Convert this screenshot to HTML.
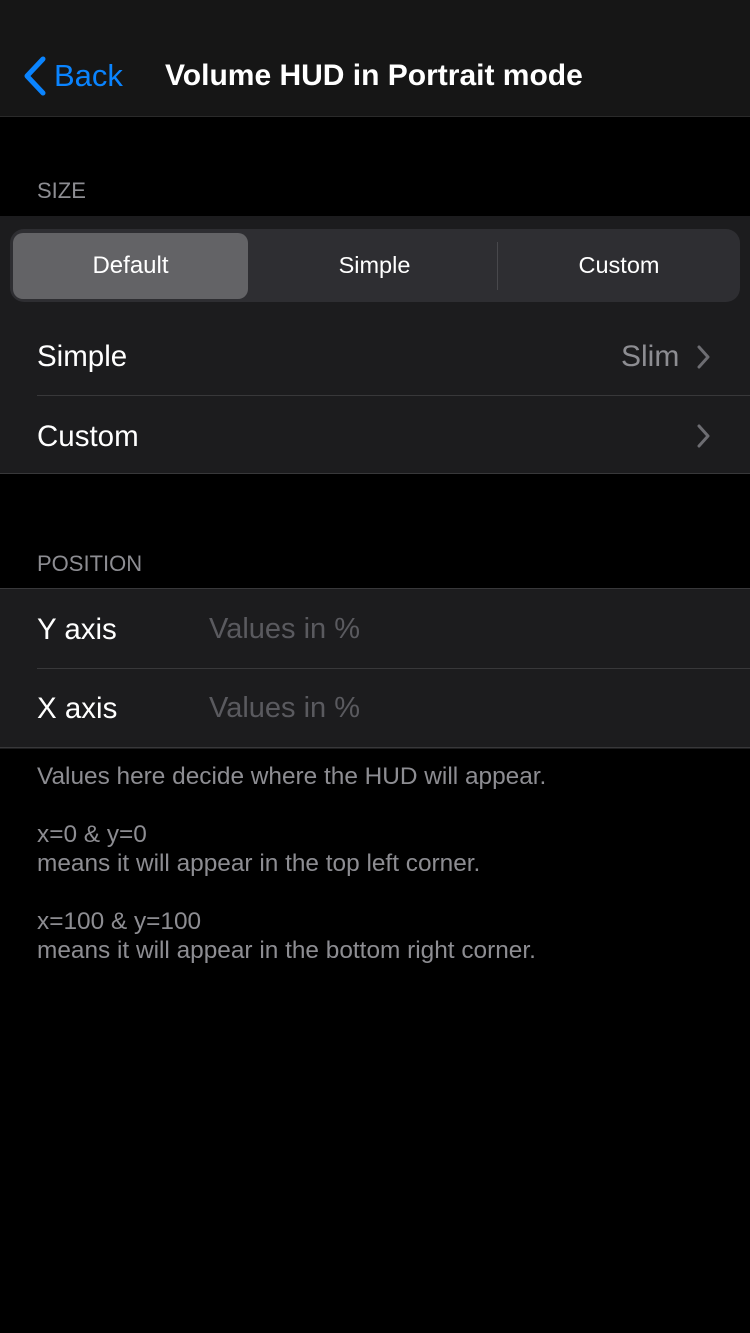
<!DOCTYPE html>
<html><head><style>
body{margin:0;width:750px;height:1333px;background:#000;font-family:"Liberation Sans",sans-serif;position:relative;overflow:hidden}
.a{position:absolute}
.nav{left:0;top:0;width:750px;height:116px;background:#161616;border-bottom:1px solid #2a2a2a}
.grp{left:0;width:750px;background:#1c1c1e}
.sep{position:absolute;height:1px;background:#38383a}
.hdr{color:#8d8d92;font-size:22px;left:37px}
.t{color:#fff;font-size:29.5px}
.g{color:#5a5a5f;font-size:29px}
.f{color:#8d8d92;font-size:24.4px;left:37px;line-height:29px}
</style></head><body>
<div class="a nav">
<svg class="a" style="left:22px;top:56px" width="26" height="40" viewBox="0 0 26 40"><path d="M21 3L5 20L21 37" stroke="#0a84ff" stroke-width="5" fill="none" stroke-linecap="round" stroke-linejoin="round"/></svg>
<div class="a" style="left:54px;top:58px;color:#0a84ff;font-size:31px">Back</div>
<div class="a" style="left:165px;top:59px;color:#fff;font-size:30px;font-weight:bold">Volume HUD in Portrait mode</div>
</div>
<div class="a hdr" style="top:178px">SIZE</div>
<div class="a grp" style="top:216px;height:258px">
 <div class="a" style="left:10px;top:13px;width:730px;height:73px;background:#2e2e32;border-radius:14px"></div>
 <div class="a" style="left:13px;top:17px;width:235px;height:66px;background:#636366;border-radius:10px"></div>
 <div class="a" style="left:497px;top:26px;width:1px;height:48px;background:#48484c"></div>
 <div class="a" style="left:13px;top:36px;width:235px;text-align:center;color:#fff;font-size:24px">Default</div>
 <div class="a" style="left:252px;top:36px;width:245px;text-align:center;color:#fff;font-size:23.5px">Simple</div>
 <div class="a" style="left:498px;top:36px;width:242px;text-align:center;color:#fff;font-size:23.5px">Custom</div>
 <div class="a t" style="left:37px;top:124px">Simple</div>
 <div class="a" style="left:621px;top:124px;color:#8d8d92;font-size:30px">Slim</div>
 <svg class="a" style="left:697px;top:129px" width="14" height="24"><path d="M2 2L11 12L2 22" stroke="#6d6d72" stroke-width="3" fill="none" stroke-linecap="round" stroke-linejoin="round"/></svg>
 <div class="sep" style="left:37px;top:179px;width:713px"></div>
 <div class="a t" style="left:37px;top:204px">Custom</div>
 <svg class="a" style="left:697px;top:208px" width="14" height="24"><path d="M2 2L11 12L2 22" stroke="#6d6d72" stroke-width="3" fill="none" stroke-linecap="round" stroke-linejoin="round"/></svg>
 <div class="sep" style="left:0;top:257px;width:750px"></div>
</div>
<div class="a hdr" style="top:551px">POSITION</div>
<div class="a grp" style="top:588px;height:160px;border-top:1px solid #38383a">
 <div class="a t" style="left:37px;top:24px">Y axis</div>
 <div class="a g" style="left:209px;top:24px">Values in %</div>
 <div class="sep" style="left:37px;top:79px;width:713px"></div>
 <div class="a t" style="left:37px;top:103px">X axis</div>
 <div class="a g" style="left:209px;top:103px">Values in %</div>
 <div class="sep" style="left:0;top:158px;width:750px"></div>
</div>
<div class="a f" style="top:762px">Values here decide where the HUD will appear.<br><br>x=0 &amp; y=0<br>means it will appear in the top left corner.<br><br>x=100 &amp; y=100<br>means it will appear in the bottom right corner.</div>
</body></html>
